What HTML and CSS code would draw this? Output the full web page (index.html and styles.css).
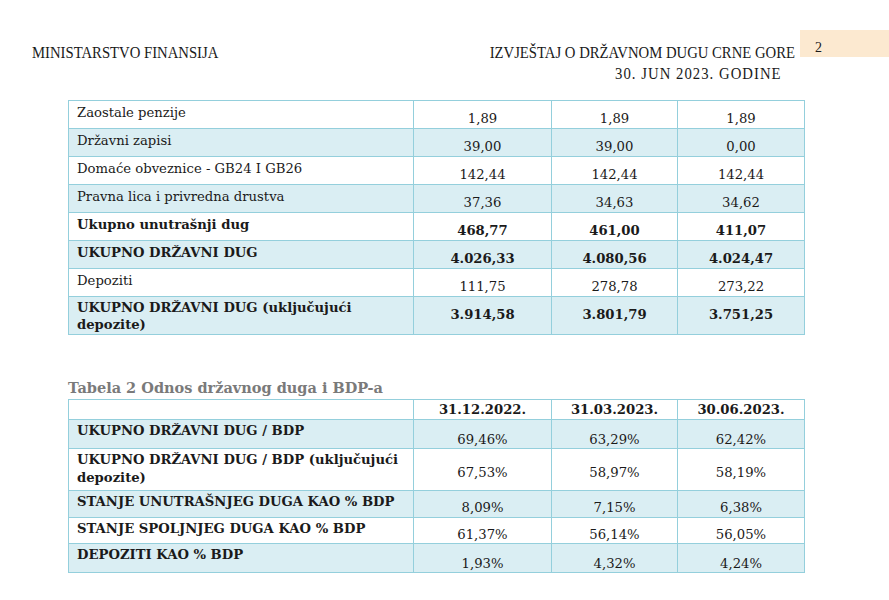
FILE: index.html
```html
<!DOCTYPE html>
<html>
<head>
<meta charset="utf-8">
<link rel="stylesheet" href="styles.css">
</head>
<body>
<div class="page">
  <header class="header">
    <div class="ministry"><span class="cond left">MINISTARSTVO FINANSIJA</span></div>
    <div class="right">
      <div class="titles">
        <div class="line1"><span class="cond rgt">IZVJEŠTAJ O DRŽAVNOM DUGU CRNE GORE</span></div>
        <div class="line2"><span class="cond rgt wide">30. JUN 2023. GODINE</span></div>
      </div>
      <div class="pagenum">2</div>
    </div>
  </header>

  <table class="debt t1tab">
    <colgroup><col class="c0"><col class="c1"><col class="c2"><col class="c3"></colgroup>
    <tr class="w"><td class="lbl">Zaostale penzije</td><td class="num">1,89</td><td class="num">1,89</td><td class="num">1,89</td></tr>
    <tr class="b"><td class="lbl">Državni zapisi</td><td class="num">39,00</td><td class="num">39,00</td><td class="num">0,00</td></tr>
    <tr class="w"><td class="lbl">Domaće obveznice - GB24 I GB26</td><td class="num">142,44</td><td class="num">142,44</td><td class="num">142,44</td></tr>
    <tr class="b"><td class="lbl">Pravna lica i privredna drustva</td><td class="num">37,36</td><td class="num">34,63</td><td class="num">34,62</td></tr>
    <tr class="w bold"><td class="lbl">Ukupno unutrašnji dug</td><td class="num">468,77</td><td class="num">461,00</td><td class="num">411,07</td></tr>
    <tr class="b bold"><td class="lbl">UKUPNO DRŽAVNI DUG</td><td class="num">4.026,33</td><td class="num">4.080,56</td><td class="num">4.024,47</td></tr>
    <tr class="w"><td class="lbl">Depoziti</td><td class="num">111,75</td><td class="num">278,78</td><td class="num">273,22</td></tr>
    <tr class="b bold two"><td class="lbl">UKUPNO DRŽAVNI DUG (uključujući depozite)</td><td class="num">3.914,58</td><td class="num">3.801,79</td><td class="num">3.751,25</td></tr>
  </table>

  <div class="caption">Tabela 2 Odnos državnog duga i BDP-a</div>

  <table class="debt t2tab">
    <colgroup><col class="c0"><col class="c1"><col class="c2"><col class="c3"></colgroup>
    <tr class="w bold head"><td class="lbl"></td><td class="num">31.12.2022.</td><td class="num">31.03.2023.</td><td class="num">30.06.2023.</td></tr>
    <tr class="b bold r1"><td class="lbl">UKUPNO DRŽAVNI DUG / BDP</td><td class="num n">69,46%</td><td class="num n">63,29%</td><td class="num n">62,42%</td></tr>
    <tr class="w bold r2"><td class="lbl">UKUPNO DRŽAVNI DUG / BDP (uključujući depozite)</td><td class="num n">67,53%</td><td class="num n">58,97%</td><td class="num n">58,19%</td></tr>
    <tr class="b bold r3"><td class="lbl">STANJE UNUTRAŠNJEG DUGA KAO % BDP</td><td class="num n">8,09%</td><td class="num n">7,15%</td><td class="num n">6,38%</td></tr>
    <tr class="w bold r4"><td class="lbl">STANJE SPOLJNJEG DUGA KAO % BDP</td><td class="num n">61,37%</td><td class="num n">56,14%</td><td class="num n">56,05%</td></tr>
    <tr class="b bold r5"><td class="lbl">DEPOZITI KAO % BDP</td><td class="num n">1,93%</td><td class="num n">4,32%</td><td class="num n">4,24%</td></tr>
  </table>
</div>
</body>
</html>
```

FILE: styles.css
```css
html, body {
  margin: 0;
  padding: 0;
  background: #ffffff;
}

.page {
  width: 889px;
  height: 600px;
  overflow: hidden;
  padding-top: 30px;
  box-sizing: border-box;
  color: #1a1a1a;
}

.header {
  display: flex;
  justify-content: space-between;
  align-items: flex-start;
  font-family: "Liberation Serif", serif;
  font-size: 17px;
  line-height: 19px;
}

.cond {
  display: inline-block;
  white-space: nowrap;
  transform: scaleX(0.865);
}

.cond.left { transform-origin: left center; }
.cond.rgt { transform-origin: right center; }
.cond.wide { letter-spacing: 1.2px; }

.ministry {
  margin-left: 32px;
  padding-top: 13px;
}

.right {
  display: flex;
  align-items: flex-start;
  gap: 5px;
}

.titles {
  text-align: right;
  padding-top: 13px;
}

.line2 {
  padding-right: 13px;
  margin-top: 2px;
}

.pagenum {
  width: 74px;
  height: 19px;
  padding-left: 15px;
  padding-top: 8px;
  background: #fce9d0;
  font-size: 14px;
}

.debt {
  border-collapse: collapse;
  table-layout: fixed;
  width: 736px;
  margin-left: 68px;
  font-family: "DejaVu Serif", serif;
  font-size: 13.2px;
  color: #1a1a1a;
}

.c0 { width: 345px; }
.c1 { width: 138px; }
.c2 { width: 126px; }
.c3 { width: 127px; }

.debt td {
  border: 1px solid #94cfdc;
  padding: 0;
}

.t1tab {
  margin-top: 17px;
}

.t1tab tr { height: 28px; }
.t1tab tr.two { height: 38px; }

.w { background: #ffffff; }
.b { background: #daeef3; }

.bold { font-weight: bold; }

.debt td.lbl {
  vertical-align: top;
  padding: 3px 8px 0 8px;
  line-height: 18px;
}

.t1tab tr.two td.lbl {
  line-height: 17px;
  padding-top: 2px;
}

.debt td.num {
  text-align: center;
  vertical-align: top;
  padding-top: 9px;
  line-height: 18px;
}

.caption {
  margin-top: 43px;
  margin-left: 68px;
  font-family: "DejaVu Serif", serif;
  font-weight: bold;
  font-size: 14.5px;
  line-height: 20px;
  color: #7a7a7a;
  height: 21px;
}

.t2tab .num.n { font-weight: normal; }

.t2tab tr.head { height: 20px; }
.t2tab tr.head td.num { padding-top: 1px; }
.t2tab tr.r1 { height: 28px; }
.t2tab tr.r2 { height: 42px; }
.t2tab tr.r3 { height: 27px; }
.t2tab tr.r4 { height: 26px; }
.t2tab tr.r5 { height: 29px; }

.t2tab td.lbl { padding-top: 2px; }
.t2tab td.num.n { line-height: 16px; padding-top: 12px; }
.t2tab tr.r2 td.num.n { padding-top: 16px; }
.t2tab tr.r3 td.num.n,
.t2tab tr.r4 td.num.n { padding-top: 9px; }
```
